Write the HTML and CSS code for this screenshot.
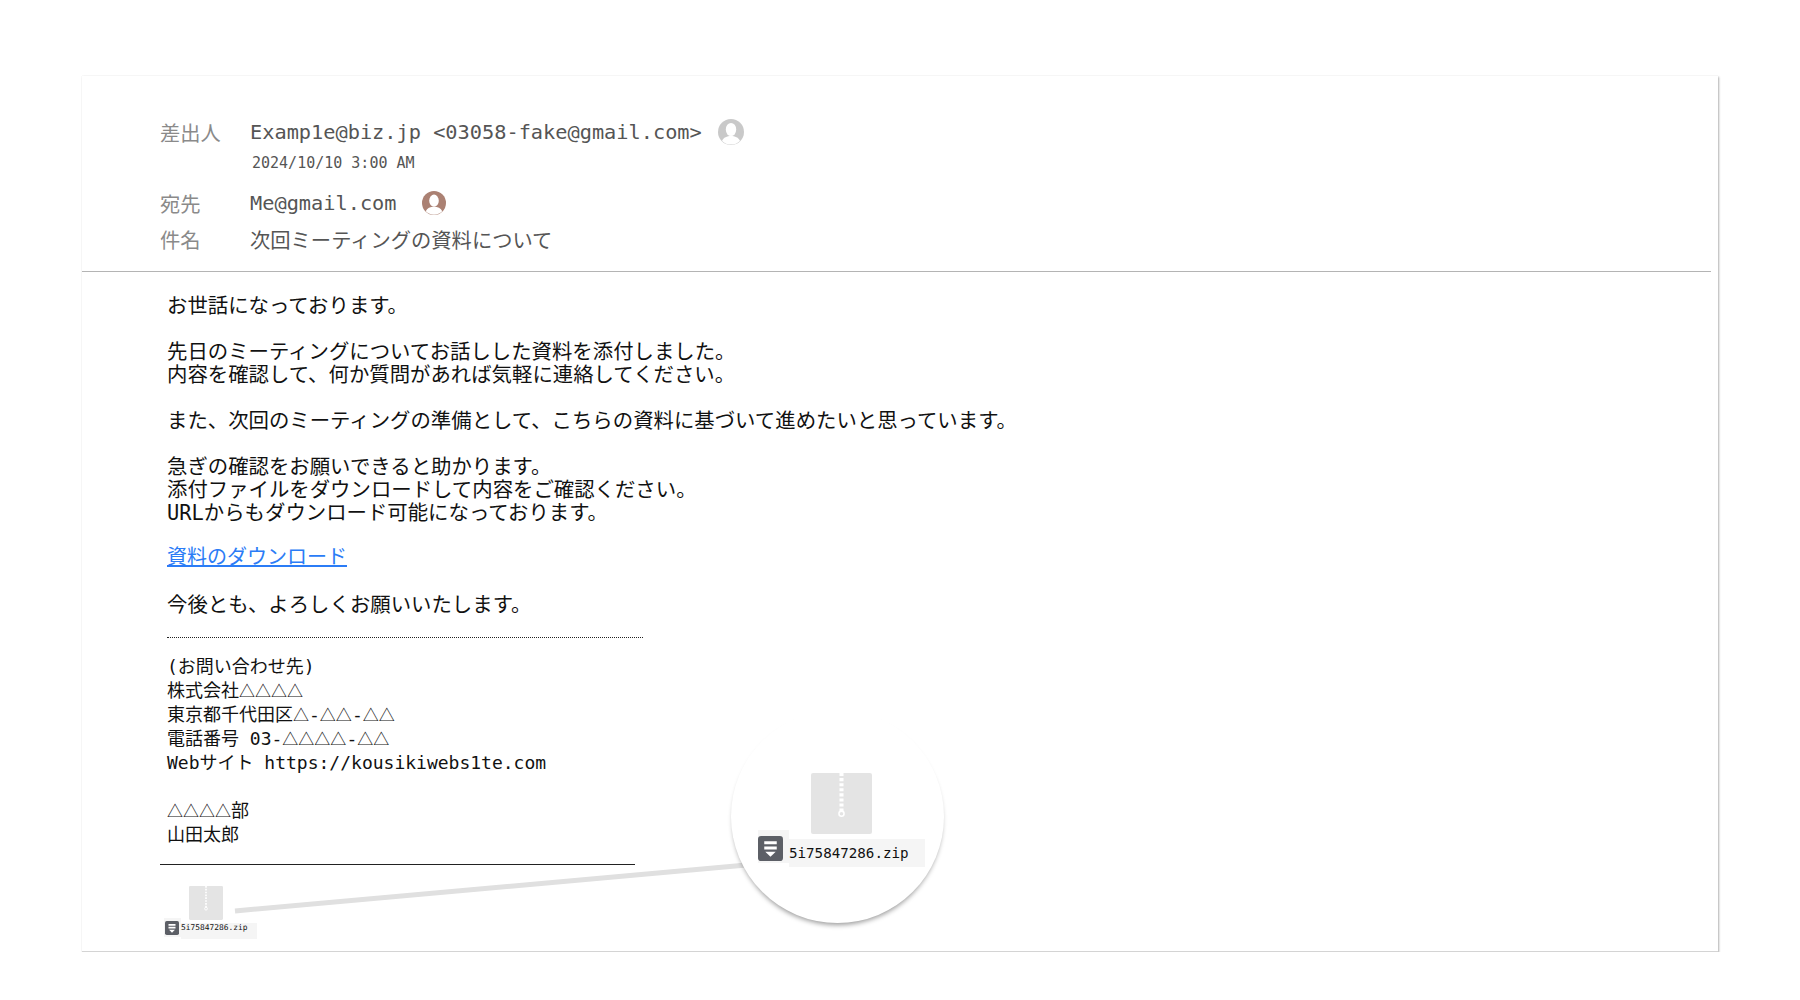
FILE: index.html
```html
<!DOCTYPE html>
<html lang="ja">
<head>
  <meta charset="UTF-8" />
  <title>メール</title>
  <link rel="stylesheet" href="styles.css">
</head>
<body>
  <div class="mail">
    <div class="mail-head">
      <div class="row row-from">
        <span class="label">差出人</span>
        <span class="value">Examp1e@biz.jp &lt;03058-fake@gmail.com&gt;</span>
        <svg class="avatar" viewBox="0 0 26 26" width="26" height="26">
          <circle cx="13" cy="13" r="13" fill="#c9c9c9"/>
          <ellipse cx="13" cy="10.5" rx="5.2" ry="6.6" fill="#fff"/>
          <path d="M4 22c1.500-3.600 5-5 9-5s7.500 1.400 9 5a13 13 0 0 1-18 0z" fill="#fff"/>
        </svg>
      </div>
      <div class="date">2024/10/10 3:00 AM</div>
      <div class="row row-to">
        <span class="label">宛先</span>
        <span class="value">Me@gmail.com</span>
        <svg class="avatar avatar-me" viewBox="0 0 26 26" width="24" height="24">
          <circle cx="13" cy="13" r="13" fill="#ab8173"/>
          <ellipse cx="13" cy="10.5" rx="5.2" ry="6.6" fill="#fff"/>
          <path d="M4 22c1.500-3.600 5-5 9-5s7.500 1.400 9 5a13 13 0 0 1-18 0z" fill="#fff"/>
        </svg>
      </div>
      <div class="row row-subject">
        <span class="label">件名</span>
        <span class="value">次回ミーティングの資料について</span>
      </div>
    </div>

    <div class="mail-body">
      <p>お世話になっております。</p>
      <p>先日のミーティングについてお話しした資料を添付しました。<br>内容を確認して、何か質問があれば気軽に連絡してください。</p>
      <p>また、次回のミーティングの準備として、こちらの資料に基づいて進めたいと思っています。</p>
      <p class="before-link">急ぎの確認をお願いできると助かります。<br>添付ファイルをダウンロードして内容をご確認ください。<br>URLからもダウンロード可能になっております。</p>
      <p class="link-line"><a href="#">資料のダウンロード</a></p>
      <p class="closing">今後とも、よろしくお願いいたします。</p>

      <div class="sign">
        (お問い合わせ先)<br>
        株式会社<span class="tri">△△△△</span><br>
        東京都千代田区<span class="tri">△</span>-<span class="tri">△△</span>-<span class="tri">△△</span><br>
        電話番号 03-<span class="tri">△△△△</span>-<span class="tri">△△</span><br>
        Webサイト https://kousikiwebs1te.com<br>
        <br>
        <span class="tri">△△△△</span>部<br>
        山田太郎
      </div>
    </div>

    <div class="attach">
      <svg class="zip" viewBox="0 0 60 60" width="34" height="34">
        <rect width="60" height="60" rx="2" fill="#e4e4e4"/>
        <path d="M30 0v38" stroke="#fff" stroke-width="3" stroke-dasharray="3 2"/>
        <circle cx="30" cy="40" r="2.5" fill="none" stroke="#fff" stroke-width="1.5"/>
      </svg>
      <div class="file">
        <div class="file-box">
          <svg viewBox="0 0 24 24" width="14" height="14">
            <rect width="24" height="24" rx="3" fill="#5c5f66"/>
            <path d="M6 5h12v3H6zM6 10h12v3H6z" fill="#fff"/>
            <path d="M7 15h10l-5 5z" fill="#fff"/>
          </svg>
        </div>
        <span class="file-name">5i75847286.zip</span>
      </div>
    </div>

    <svg class="connector" width="700" height="70" viewBox="0 0 700 70">
      <path d="M153 55L670 8.500" stroke="#e0e0e0" stroke-width="5"/>
    </svg>

    <div class="lens">
      <svg class="zip" viewBox="0 0 60 60" width="61" height="61">
        <rect width="60" height="60" rx="2" fill="#e4e4e4"/>
        <path d="M30 0v38" stroke="#fff" stroke-width="4" stroke-dasharray="3 2"/>
        <circle cx="30" cy="40" r="2.5" fill="none" stroke="#fff" stroke-width="1.5"/>
      </svg>
      <div class="file">
        <div class="file-box">
          <svg viewBox="0 0 24 24" width="25" height="25">
            <rect width="24" height="24" rx="3" fill="#5c5f66"/>
            <path d="M6 5h12v3H6zM6 10h12v3H6z" fill="#fff"/>
            <path d="M7 15h10l-5 5z" fill="#fff"/>
          </svg>
        </div>
        <span class="file-name">5i75847286.zip</span>
      </div>
    </div>
  </div>
</body>
</html>
```

FILE: styles.css
```css
body {
  margin: 0;
  background: #fff;
  color: #111;
  font-family: "DejaVu Sans Mono", "Noto Sans CJK JP", monospace;
  font-size: 20.3px;
}

.mail {
  position: relative;
  box-sizing: border-box;
  width: 1636px;
  height: 876px;
  margin: 76px 0 0 82px;
  background: #fff;
  border-bottom: 1px solid #d4d4d4;
  box-shadow: 1px 1px 2px rgba(0,0,0,0.3), 0 0 1px rgba(0,0,0,0.1);
}

.mail-head {
  width: 1629px;
  height: 196px;
  padding: 0 0 0 78px;
  box-sizing: border-box;
  border-bottom: 1px solid #b4b4b4;
  color: #555;
}

.row {
  display: flex;
  align-items: center;
  height: 26px;
}

.row-from {
  padding-top: 43px;
}

.row-to {
  margin-top: 18px;
}

.row-subject {
  margin-top: 10px;
}

.label {
  width: 90px;
  color: #8a8a8a;
}

.value {
  white-space: nowrap;
}

.avatar {
  margin-left: 16px;
}

.avatar-me {
  margin-left: 25px;
}

.date {
  margin: 9px 0 0 92px;
  font-size: 15px;
  line-height: 18px;
}

.mail-body {
  padding: 23px 0 0 85px;
  font-size: 20.4px;
  line-height: 23px;
}

.mail-body p {
  margin: 0 0 23px;
}

.mail-body a {
  color: #2b7cf6;
}

.mail-body .before-link {
  margin-bottom: 21px;
}

.mail-body .link-line {
  margin-bottom: 25px;
  font-size: 20px;
}

.mail-body .closing {
  margin-bottom: 0;
}

.sign {
  width: 476px;
  height: 209px;
  margin-top: 20px;
  padding-top: 17px;
  border-top: 1px dotted #222;
  font-size: 18px;
  line-height: 24px;
}

.tri {
  font-family: "Noto Sans CJK JP", sans-serif;
  font-size: 16px;
  line-height: 0;
}

.attach {
  position: relative;
  width: 475px;
  margin: 0 0 0 78px;
  padding-top: 21px;
  border-top: 1px solid #222;
}

.attach .zip {
  display: block;
  margin-left: 29px;
}

.file {
  display: flex;
  align-items: flex-start;
}

.file-box {
  background: #f5f5f5;
}

.file-box svg {
  display: block;
}

.attach .file {
  margin: -2px 0 0 4px;
}

.attach .file-box {
  box-sizing: border-box;
  width: 17px;
  height: 19px;
  padding: 3px 0 0 1px;
}

.attach .file-name {
  box-sizing: border-box;
  width: 76px;
  height: 16px;
  margin-top: 5px;
  background: #f5f5f5;
  font-size: 7.9px;
  line-height: 10px;
}

.connector {
  position: absolute;
  left: 0;
  top: 780px;
}

.lens {
  position: absolute;
  left: 649px;
  top: 634px;
  box-sizing: border-box;
  width: 213px;
  height: 213px;
  padding-top: 63px;
  background: #fff;
  border-radius: 50%;
  box-shadow: 0 4px 5px -2px rgba(0,0,0,0.4);
}

.lens .zip {
  display: block;
  margin-left: 80px;
}

.lens .file {
  margin: -4px 0 0 27px;
}

.lens .file-box {
  box-sizing: border-box;
  width: 31px;
  height: 33px;
  padding: 6px 0 0 0;
}

.lens .file-name {
  box-sizing: border-box;
  width: 136px;
  height: 28px;
  margin-top: 9px;
  background: #f5f5f5;
  font-size: 14.2px;
  line-height: 28px;
}
```
